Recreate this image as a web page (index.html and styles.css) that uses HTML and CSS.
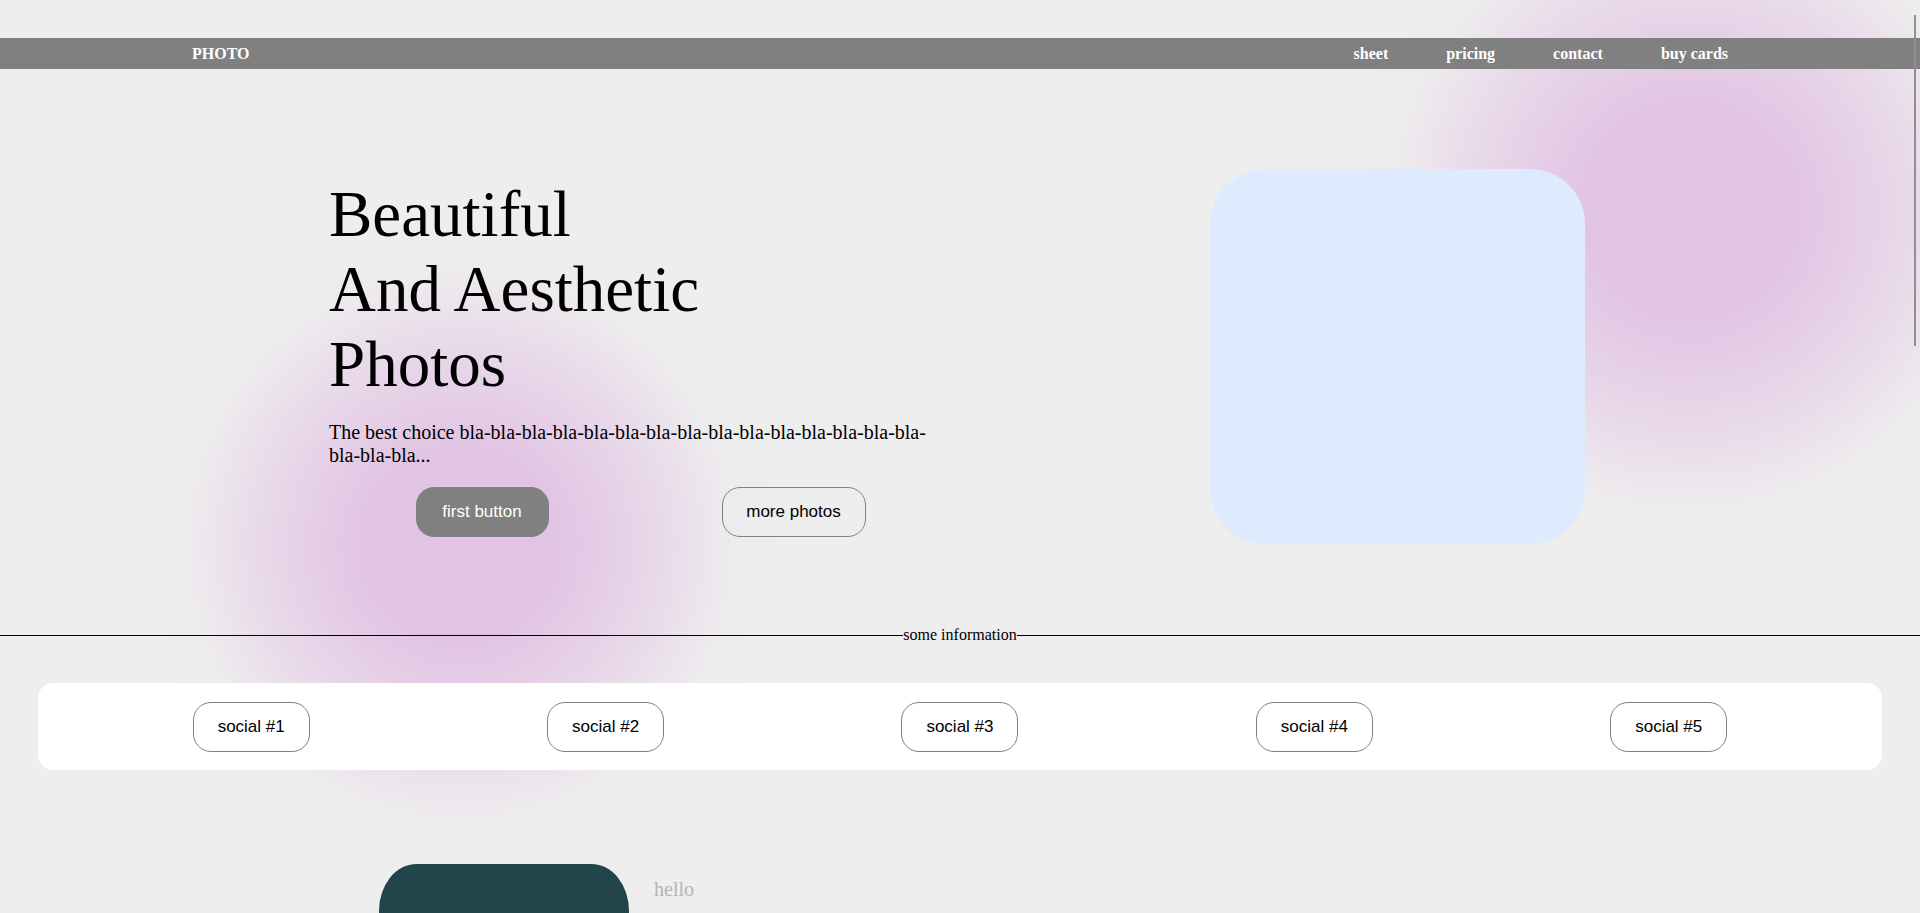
FILE: index.html
```html
<!DOCTYPE html>
<html lang="en">
<head>
<meta charset="utf-8">
<title>PHOTO</title>
<link rel="stylesheet" href="styles.css">
</head>
<body>
<div class="blobs" aria-hidden="true">
  <div class="blob blob-right"></div>
  <div class="blob blob-left"></div>
</div>
<div class="scroll-thumb" aria-hidden="true"></div>

<header class="nav">
  <div class="logo">PHOTO</div>
  <nav class="links">
    <a href="#">sheet</a>
    <a href="#">pricing</a>
    <a href="#">contact</a>
    <a href="#">buy cards</a>
  </nav>
</header>

<main class="page">
  <section class="hero">
    <div class="hero-text">
      <h1 class="title">Beautiful<br>And Aesthetic<br>Photos</h1>
      <p class="lead">The best choice bla-bla-bla-bla-bla-bla-bla-bla-bla-bla-bla-bla-bla-bla-bla-bla-bla-bla...</p>
      <div class="actions">
        <button class="btn btn-primary">first button</button>
        <button class="btn btn-outline">more photos</button>
      </div>
    </div>
    <div class="hero-photo"></div>
  </section>

  <div class="divider">
    <span class="divider-line"></span>
    <span class="divider-text">some information</span>
    <span class="divider-line"></span>
  </div>

  <section class="socials">
    <button class="btn social">social #1</button>
    <button class="btn social">social #2</button>
    <button class="btn social">social #3</button>
    <button class="btn social">social #4</button>
    <button class="btn social">social #5</button>
  </section>

  <section class="gallery">
    <div class="tile"></div>
    <div class="tile-caption">hello</div>
  </section>
</main>
</body>
</html>
```

FILE: styles.css
```css
html, body {
  margin: 0;
  padding: 0;
}

body {
  background: #eeeeee;
  font-family: "Liberation Serif", "Times New Roman", serif;
  color: #000;
  position: relative;
  min-height: 1400px;
  overflow-x: hidden;
}

.blobs {
  position: absolute;
  inset: 0;
  z-index: 0;
  pointer-events: none;
  overflow: hidden;
}

.blob {
  position: absolute;
  border-radius: 50%;
  background: radial-gradient(circle closest-side,
    rgba(225, 195, 227, 1) 0%,
    rgba(225, 195, 227, 0.97) 30%,
    rgba(228, 200, 230, 0.6) 60%,
    rgba(235, 225, 236, 0.2) 85%,
    rgba(238, 238, 238, 0) 100%);
}

.blob-right {
  width: 700px;
  height: 700px;
  left: 1340px;
  top: -140px;
}

.blob-left {
  width: 640px;
  height: 640px;
  left: 140px;
  top: 225px;
}

.scroll-thumb {
  position: fixed;
  right: 4px;
  top: 15px;
  width: 2px;
  height: 331px;
  background: #909090;
  z-index: 10;
}

.nav {
  position: relative;
  z-index: 2;
  margin-top: 38px;
  height: 31px;
  background: #808080;
  display: flex;
  align-items: center;
  justify-content: space-between;
  padding: 0 192px;
  font-weight: bold;
  font-size: 16px;
  color: #fff;
}

.links {
  display: flex;
  gap: 58px;
}

.links a {
  color: #fff;
  text-decoration: none;
}

.page {
  position: relative;
  z-index: 1;
}

.hero {
  display: flex;
  justify-content: space-between;
  align-items: center;
  padding: 100px 335px 0 329px;
}

.hero-text {
  width: 623px;
}

.title {
  margin: 0;
  font-size: 65px;
  font-weight: normal;
  line-height: 75px;
}

.lead {
  margin: 19px 0 20px;
  font-size: 20px;
  line-height: 23px;
}

.actions {
  display: flex;
  justify-content: space-around;
}

.btn {
  font-family: "Liberation Sans", Arial, sans-serif;
  font-size: 17px;
  height: 50px;
  border: 1px solid #808080;
  border-radius: 18px;
  background: transparent;
  color: #000;
  padding: 0;
  cursor: pointer;
}

.btn-primary {
  width: 133px;
  background: #808080;
  color: #fff;
}

.btn-outline {
  width: 144px;
}

.hero-photo {
  width: 375px;
  height: 375px;
  border-radius: 55px;
  background: #deeafd;
}

.divider {
  display: flex;
  align-items: center;
  margin-top: 82px;
  font-size: 16px;
}

.divider-line {
  flex: 1;
  height: 1px;
  background: #000;
}

.divider-text {
  line-height: normal;
}

.socials {
  margin: 39px 38px 0;
  padding: 19px 36px 18px;
  background: #fff;
  border-radius: 15px;
  display: flex;
  justify-content: space-around;
}

.social {
  width: 117px;
  background: #fff;
}

.gallery {
  display: flex;
  align-items: flex-start;
  gap: 25px;
  margin-top: 94px;
  padding-left: 379px;
}

.tile {
  width: 250px;
  height: 312px;
  border-radius: 15%;
  background: #21454b;
}

.tile-caption {
  padding-top: 14px;
  font-size: 20px;
  line-height: 23px;
  color: #b5b5b5;
}
```
